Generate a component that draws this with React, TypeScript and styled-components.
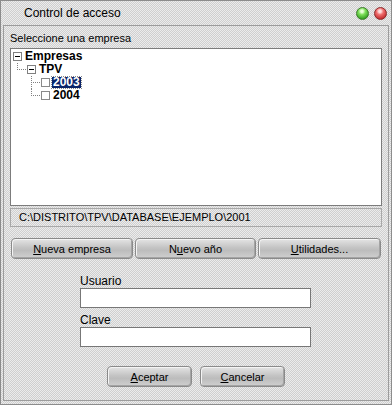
import React from "react";
import styled, { createGlobalStyle } from "styled-components";

const GlobalStyle = createGlobalStyle`
  body {
    margin: 0;
    font-family: "Liberation Sans", Arial, sans-serif;
    font-size: 11px;
    color: #000;
  }
`;

/* fondo punteado tipo "dither" */
const dither = `
  background-color: #dcdcdc;
  background-image: repeating-conic-gradient(#cfcfcf 0 25%, #ececec 0 50%);
  background-size: 2px 2px;
`;

const Window = styled.div`
  ${dither}
  width: 392px;
  height: 405px;
  box-sizing: border-box;
  border: 1px solid #8c8c8c;
  display: flex;
  flex-direction: column;
`;

const TitleBar = styled.div`
  height: 24px;
  display: flex;
  align-items: center;
  padding-left: 23px;
  padding-right: 4px;
  font-size: 12px;
`;

const Title = styled.span`
  flex: 1;
  margin-top: -1px;
`;

const Bubble = styled.span<{ $color: "green" | "red" }>`
  width: 13px;
  height: 13px;
  border-radius: 50%;
  margin-left: 5px;
  border: 1px solid ${(p) => (p.$color === "green" ? "#3c7a2a" : "#8a2b2b")};
  box-sizing: border-box;
  background: ${(p) =>
    p.$color === "green"
      ? "radial-gradient(circle at 45% 30%, #e8ffd8 0 12%, #7ee05a 35%, #2f9a1e 80%)"
      : "radial-gradient(circle at 45% 30%, #ffe0e0 0 12%, #f07070 35%, #c0282a 80%)"};
`;

const Body = styled.div`
  flex: 1;
  margin: 0 2px 3px 2px;
  border: 1px solid #9c9c9c;
  padding: 6px 0 0 6px;
  display: flex;
  flex-direction: column;
`;

const Caption = styled.div`
  height: 13px;
  line-height: 13px;
  margin-bottom: 3px;
`;

const TreeBox = styled.div`
  width: 372px;
  height: 158px;
  box-sizing: border-box;
  background: #fff;
  border: 1px solid #7c7c7c;
  padding-top: 1px;
`;

const Row = styled.div<{ $level: number }>`
  height: 13px;
  display: flex;
  align-items: center;
  padding-left: ${(p) => (p.$level === 0 ? 2 : 6 + (p.$level - 1) * 14)}px;
`;

const Connector = styled.span<{ $last?: boolean }>`
  position: relative;
  width: 10px;
  height: 13px;
  flex: none;
  &::before {
    content: "";
    position: absolute;
    left: 0;
    top: 0;
    height: ${(p) => (p.$last ? "7px" : "13px")};
    border-left: 1px dotted #808080;
  }
  &::after {
    content: "";
    position: absolute;
    left: 0;
    top: 6px;
    width: 9px;
    border-top: 1px dotted #808080;
  }
`;

const Expander = styled.span`
  position: relative;
  width: 9px;
  height: 9px;
  box-sizing: border-box;
  border: 1px solid #808080;
  background: #fff;
  flex: none;
  &::after {
    content: "";
    position: absolute;
    left: 1px;
    right: 1px;
    top: 3px;
    border-top: 1px solid #000;
  }
`;

const Check = styled.span`
  width: 9px;
  height: 9px;
  box-sizing: border-box;
  border: 1px solid #8a8a8a;
  background: #fff;
  flex: none;
`;

const NodeText = styled.span<{ $selected?: boolean }>`
  font-weight: bold;
  font-size: 12px;
  line-height: 11px;
  margin-left: 2px;
  padding: 0 1px;
  color: ${(p) => (p.$selected ? "#fff" : "#000")};
  background: ${(p) => (p.$selected ? "#0a246a" : "transparent")};
  outline: ${(p) => (p.$selected ? "1px dotted #888" : "none")};
`;

const PathBox = styled.div`
  width: 372px;
  height: 19px;
  margin-top: 2px;
  box-sizing: border-box;
  border: 1px solid #a8a8a8;
  padding-left: 8px;
  line-height: 17px;
`;

const ButtonRow = styled.div`
  display: flex;
  gap: 2px;
  margin-top: 11px;
  padding-left: 1px;
`;

const Button = styled.button<{ $width: number }>`
  width: ${(p) => p.$width}px;
  height: 21px;
  padding: 0;
  font-family: inherit;
  font-size: 11px;
  color: #000;
  border: 1px solid #8a8a8a;
  border-radius: 4px;
  background: linear-gradient(#e4e4e4, #c4c4c4 45%, #bcbcbc 60%, #cfcfcf);
  box-shadow: inset 1px 1px 0 #f4f4f4, inset -1px -1px 0 #a4a4a4;
  cursor: pointer;

  u {
    text-decoration: underline;
  }
`;

const Form = styled.div`
  display: flex;
  flex-direction: column;
  padding-left: 70px;
  margin-top: 16px;
`;

const FieldLabel = styled.label`
  height: 13px;
  line-height: 12px;
  font-size: 12px;
`;

const Input = styled.input`
  width: 231px;
  height: 20px;
  box-sizing: border-box;
  border: 1px solid #777;
  background: #fff;
  margin: 0 0 6px 0;
  outline: none;
`;

const Actions = styled.div`
  display: flex;
  gap: 8px;
  padding-left: 97px;
  margin-top: 13px;
`;

export default function App() {
  return (
    <>
      <GlobalStyle />
      <Window>
        <TitleBar>
          <Title>Control de acceso</Title>
          <Bubble $color="green" />
          <Bubble $color="red" />
        </TitleBar>
        <Body>
          <Caption>Seleccione una empresa</Caption>
          <TreeBox>
            <Row $level={0}>
              <Expander />
              <NodeText>Empresas</NodeText>
            </Row>
            <Row $level={1}>
              <Connector $last />
              <Expander />
              <NodeText>TPV</NodeText>
            </Row>
            <Row $level={2}>
              <Connector />
              <Check />
              <NodeText $selected>2003</NodeText>
            </Row>
            <Row $level={2}>
              <Connector $last />
              <Check />
              <NodeText>2004</NodeText>
            </Row>
          </TreeBox>
          <PathBox>C:\DISTRITO\TPV\DATABASE\EJEMPLO\2001</PathBox>
          <ButtonRow>
            <Button $width={122}>
              <u>N</u>ueva empresa
            </Button>
            <Button $width={121}>
              N<u>u</u>evo año
            </Button>
            <Button $width={123}>
              <u>U</u>tilidades...
            </Button>
          </ButtonRow>
          <Form>
            <FieldLabel>Usuario</FieldLabel>
            <Input />
            <FieldLabel>Clave</FieldLabel>
            <Input type="password" />
          </Form>
          <Actions>
            <Button $width={85}>
              <u>A</u>ceptar
            </Button>
            <Button $width={85}>
              <u>C</u>ancelar
            </Button>
          </Actions>
        </Body>
      </Window>
    </>
  );
}
